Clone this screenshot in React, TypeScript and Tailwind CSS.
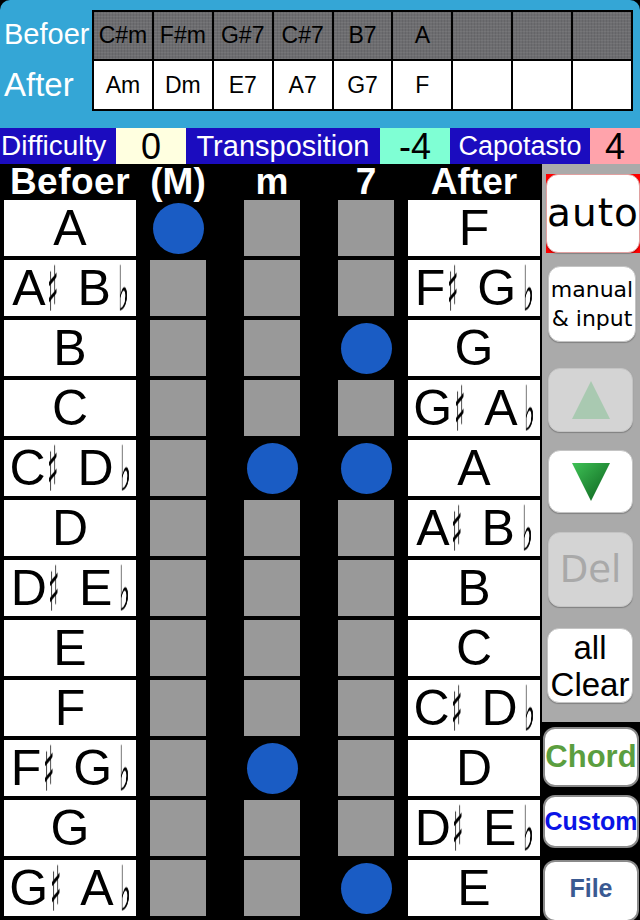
import React from 'react';

const BEFORE_ROW = ['C#m', 'F#m', 'G#7', 'C#7', 'B7', 'A', '', '', ''];
const AFTER_ROW = ['Am', 'Dm', 'E7', 'A7', 'G7', 'F', '', '', ''];

const NOTES = [
  ['A'], ['A', 'B'], ['B'], ['C'], ['C', 'D'], ['D'],
  ['D', 'E'], ['E'], ['F'], ['F', 'G'], ['G'], ['G', 'A'],
];
const AFTER_NOTES = [...NOTES.slice(8), ...NOTES.slice(0, 8)];

// which of (M) / m / 7 is picked for each row
const PICKS: number[][] = [[0], [], [2], [], [1, 2], [], [], [], [], [1], [], [2]];

const sans = "font-['Liberation_Sans',Arial,sans-serif]";
const deja = "font-['DejaVu_Sans',sans-serif]";

function Accidental({ g, w }: { g: string; w: string }) {
  return (
    <span className={`flex justify-center items-center h-[56px] ${w}`}>
      <span className="font-['DejaVu_Sans',sans-serif] text-[48px] leading-[48px] inline-block scale-x-[0.5] scale-y-[1.3] will-change-transform">
        {g}
      </span>
    </span>
  );
}

function Note({ n }: { n: string[] }) {
  if (n.length === 1) return <span>{n[0]}</span>;
  return (
    <span className="flex items-center h-[56px]">
      <span>{n[0]}</span>
      <span className="w-[12px] ml-[1px] flex justify-center items-center h-[56px]">
        <Accidental g={'\u266F\uFE0E'} w="w-[12px]" />
      </span>
      <span className="ml-[19px]">{n[1]}</span>
      <Accidental g={'\u266D\uFE0E'} w="w-[10px] ml-[7px]" />
    </span>
  );
}

function Slot({ on }: { on: boolean }) {
  return (
    <div className="w-[56px] h-[56px] flex items-center justify-center">
      {on ? (
        <div className="w-[51px] h-[51px] rounded-full bg-[#1a5cc4]" />
      ) : (
        <div className="w-[56px] h-[56px] bg-[#999999]" />
      )}
    </div>
  );
}

function SideBtn({ children, className }: { children: React.ReactNode; className: string }) {
  return (
    <div
      className={`rounded-[12px] border border-[#c4c4c4] shadow-[0_1px_1px_rgba(0,0,0,0.25)] flex flex-col items-center justify-center ${className}`}
    >
      {children}
    </div>
  );
}

export default function App() {
  return (
    <div className={`w-[640px] h-[920px] bg-black overflow-hidden ${sans}`}>
      {/* top before/after strip */}
      <div className="h-[128px] bg-[#34a6d6] rounded-t-[10px] flex pt-[10px]">
        <div className="w-[92px] flex flex-col text-white">
          <div className="h-[50px] flex items-center pl-[4px] text-[29px]">Befoer</div>
          <div className="h-[49px] flex items-center pl-[4px] text-[33px]">After</div>
        </div>
        <div className="w-[541px] h-[101px] border-2 border-black flex flex-col">
          <div className="flex h-[49px] border-b-2 border-black">
            {BEFORE_ROW.map((c, i) => (
              <div
                key={i}
                className="flex-1 flex items-center justify-center text-[23px] text-black border-r-2 border-black last:border-r-0 bg-[#6d6d70] bg-[repeating-linear-gradient(0deg,rgba(255,255,255,0.06)_0px,rgba(255,255,255,0.06)_1px,transparent_1px,transparent_3px),repeating-linear-gradient(90deg,rgba(0,0,0,0.08)_0px,rgba(0,0,0,0.08)_1px,transparent_1px,transparent_3px)]"
              >
                {c}
              </div>
            ))}
          </div>
          <div className="flex flex-1 bg-white">
            {AFTER_ROW.map((c, i) => (
              <div
                key={i}
                className="flex-1 flex items-center justify-center text-[23px] text-black border-r-2 border-black last:border-r-0"
              >
                {c}
              </div>
            ))}
          </div>
        </div>
      </div>

      {/* settings bar */}
      <div className="h-[36px] flex text-[28px] leading-[36px]">
        <div className="w-[116px] bg-[#1b0cbf] text-white pl-[1px] whitespace-nowrap">Difficulty</div>
        <div className="w-[70px] bg-[#ffffe0] text-black text-center text-[36px] leading-[38px]">0</div>
        <div className="w-[194px] bg-[#1b0cbf] text-white text-center text-[29px] whitespace-nowrap">Transposition</div>
        <div className="w-[70px] bg-[#7fffd4] text-black text-center text-[36px] leading-[38px]">-4</div>
        <div className="w-[140px] bg-[#1b0cbf] text-white text-center text-[27px] whitespace-nowrap">Capotasto</div>
        <div className="w-[50px] bg-[#ffa3ab] text-black text-center text-[36px] leading-[38px]">4</div>
      </div>

      <div className="flex">
        {/* chord grid */}
        <div className="w-[542px]">
          <div className="h-[36px] flex text-white font-bold text-[37px] leading-[36px]">
            <div className="ml-[4px] w-[132px] text-center tracking-[0.5px]">Befoer</div>
            <div className="ml-[14px] w-[56px] text-center">(M)</div>
            <div className="ml-[38px] w-[56px] text-center">m</div>
            <div className="ml-[38px] w-[56px] text-center">7</div>
            <div className="ml-[14px] w-[132px] text-center">After</div>
          </div>
          <div className="flex flex-col gap-[4px]">
            {NOTES.map((n, i) => (
              <div key={i} className="flex h-[56px]">
                <div className="ml-[4px] w-[132px] bg-white text-black text-[50px] flex items-center justify-center">
                  <Note n={n} />
                </div>
                <div className="ml-[14px]">
                  <Slot on={PICKS[i].includes(0)} />
                </div>
                <div className="ml-[38px]">
                  <Slot on={PICKS[i].includes(1)} />
                </div>
                <div className="ml-[38px]">
                  <Slot on={PICKS[i].includes(2)} />
                </div>
                <div className="ml-[14px] w-[132px] bg-white text-black text-[50px] flex items-center justify-center">
                  <Note n={AFTER_NOTES[i]} />
                </div>
              </div>
            ))}
          </div>
        </div>

        {/* side controls */}
        <div className="w-[98px] flex flex-col">
          <div className="h-[558px] bg-[#aaaaaa] flex flex-col pt-[10px]">
            <div className="ml-[4px] w-[94px] h-[79px] bg-[#ff0000]">
              <SideBtn className={`h-full bg-white border-[#e0a0a0] text-black text-[39px] tracking-[1px] ${deja}`}>auto</SideBtn>
            </div>
            <SideBtn className={`mt-[13px] ml-[6px] w-[88px] h-[76px] bg-white text-black text-[22px] leading-[29px] ${deja}`}>
              <span>manual</span>
              <span>&amp; input</span>
            </SideBtn>
            <SideBtn className="mt-[26px] ml-[6px] w-[85px] h-[64px] bg-[#d4d4d4]">
              <svg width="40" height="40" viewBox="0 0 40 40">
                <polygon points="20,1 39,39 1,39" fill="#a9c9b1" />
              </svg>
            </SideBtn>
            <SideBtn className="mt-[18px] ml-[6px] w-[85px] h-[63px] bg-white">
              <svg width="40" height="40" viewBox="0 0 40 40">
                <defs>
                  <linearGradient id="dn" x1="0" y1="0" x2="1" y2="1">
                    <stop offset="0" stopColor="#3fc256" />
                    <stop offset="1" stopColor="#0a5e1c" />
                  </linearGradient>
                </defs>
                <polygon points="1,1 39,1 20,39" fill="url(#dn)" />
              </svg>
            </SideBtn>
            <SideBtn className={`mt-[19px] ml-[6px] w-[85px] h-[75px] bg-[#d4d4d4] text-[#a9a9a9] text-[37px] ${deja}`}>Del</SideBtn>
            <SideBtn className="mt-[21px] ml-[5px] w-[86px] h-[75px] bg-white text-black text-[33px] leading-[37px]">
              <span>all</span>
              <span>Clear</span>
            </SideBtn>
          </div>
          <div className="flex flex-col pt-[5px]">
            <div className="ml-[1px] w-[96px] h-[60px] rounded-[12px] border-2 border-[#8a8a8a] bg-white flex items-center justify-center font-bold text-[31px] text-[#5b9e3f]">
              Chord
            </div>
            <div className="mt-[8px] ml-[1px] w-[96px] h-[53px] rounded-[12px] border-2 border-[#8a8a8a] bg-white flex items-center justify-center font-bold text-[25px] text-[#0a14e6]">
              Custom
            </div>
            <div className="mt-[12px] ml-[1px] w-[96px] h-[62px] rounded-[12px] border-2 border-[#8a8a8a] bg-white flex items-center justify-center font-bold text-[25px] text-[#3a5a92] pb-[4px]">
              File
            </div>
          </div>
        </div>
      </div>
    </div>
  );
}
